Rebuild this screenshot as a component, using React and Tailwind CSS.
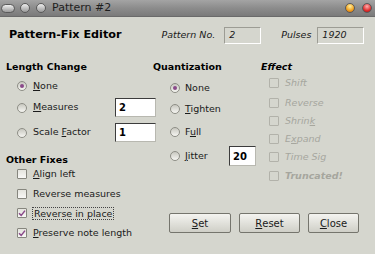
// Pattern-Fix Editor dialog (GTK clearlooks look)

function U({ children }) {
  return <span className="underline underline-offset-[1px]">{children}</span>
}

function Radio({ on }) {
  return (
    <div className="w-[10px] h-[10px] rounded-full border border-[#8e8e86] bg-gradient-to-b from-[#c8c8c0] to-[#f6f6f2] flex items-center justify-center shrink-0">
      {on && <div className="w-[4px] h-[4px] rounded-full bg-[#8a4a8a]" />}
    </div>
  )
}

function Check({ on, off }) {
  return (
    <div className={"w-[10px] h-[10px] rounded-[1px] border flex items-center justify-center shrink-0 " + (off ? "border-[#b2b2aa] bg-[#d5d6ce]" : "border-[#86867e] bg-gradient-to-b from-[#e4e4de] to-[#f8f8f6]")}>
      {on && (
        <svg viewBox="0 0 8 8" className="w-[8px] h-[8px]">
          <path d="M1 4.2 L3.2 6.4 L7 1.6" fill="none" stroke="#8a4a8a" strokeWidth="1.5" />
        </svg>
      )}
    </div>
  )
}

function Field({ value, w, h = "h-[19px]" }) {
  return (
    <div className={`${w} ${h} shrink-0 bg-white border border-[#3c3c3c] border-b-[#b8b8b0] border-r-[#b8b8b0] flex items-center pl-[3px] font-bold text-[10px] text-black`}>
      {value}
    </div>
  )
}

function Button({ children, w }) {
  return (
    <div className={`${w} h-[20px] rounded-[2px] border border-[#75756d] bg-gradient-to-b from-[#f4f4f0] to-[#cfcfc7] flex items-center justify-center text-[10px] text-[#1a1a1a]`}>
      {children}
    </div>
  )
}

function Dot({ color }) {
  return <div className="w-[10px] h-[10px] rounded-full border border-[#5a5a5a]" style={{ background: color }} />
}

export default function App() {
  return (
    <div className="w-[375px] h-[254px] bg-[#d5d6ce] overflow-hidden text-[#1a1a1a]" style={{ fontFamily: '"DejaVu Sans", Verdana, sans-serif' }}>

      {/* Title bar */}
      <div className="h-[17px] bg-gradient-to-b from-[#a4a4a4] via-[#8c8c8c] to-[#7a7a7a] border-b border-[#6a6a6a] flex items-center pl-[1px] pr-[3px]">
        <div className="w-[14px] h-[9px] rounded-full border border-[#5a5a5a] bg-gradient-to-b from-[#f0f0f0] to-[#9a9a9a]" />
        <div className="ml-[5px] w-[10px] h-[10px] rounded-full border border-[#5a5a5a] bg-gradient-to-b from-[#eeeeee] to-[#9a9a9a]" />
        <div className="ml-[6px] w-[10px] h-[10px] rounded-full border border-[#5a5a5a] bg-gradient-to-b from-[#eeeeee] to-[#9a9a9a]" />
        <span className="ml-[6px] text-[11px] text-[#1e1e1e]">Pattern #2</span>
        <div className="flex-1" />
        <Dot color="radial-gradient(circle at 50% 30%, #fff2a0, #f0a020 60%, #c86010)" />
        <div className="w-[7px]" />
        <Dot color="radial-gradient(circle at 50% 30%, #ffb0b0, #e03030 60%, #a01010)" />
      </div>

      {/* Header row */}
      <div className="flex items-center mt-[10px] h-[16px]">
        <span className="ml-[9px] text-[11.2px] font-bold text-black">Pattern-Fix Editor</span>
        <span className="ml-[40px] text-[9.5px] italic">Pattern No.</span>
        <div className="ml-[9px] w-[37px] h-[17px] border border-[#9c9c94] border-b-white border-r-white flex items-center pl-[4px] text-[9.5px] italic">2</div>
        <span className="ml-[20px] text-[9.5px] italic">Pulses</span>
        <div className="ml-[6px] w-[47px] h-[17px] border border-[#9c9c94] border-b-white border-r-white flex items-center pl-[4px] text-[9.5px] italic">1920</div>
      </div>

      <div className="flex mt-[17px]">
        {/* Column 1 */}
        <div className="w-[153px] shrink-0 pl-[6px] flex flex-col text-[9.5px]">
          <div className="h-[14px] flex items-center font-bold text-[9.5px] text-black">Length Change</div>
          <div className="mt-[2px] h-[20px] flex items-center pl-[11px] gap-[6px]"><Radio on /><span><U>N</U>one</span></div>
          <div className="mt-[2px] h-[19px] flex items-center pl-[11px] gap-[6px]"><Radio /><span className="w-[76px] shrink-0"><U>M</U>easures</span><Field value="2" w="w-[41px]" /></div>
          <div className="mt-[6px] h-[19px] flex items-center pl-[11px] gap-[6px]"><Radio /><span className="w-[76px] shrink-0">Scale <U>F</U>actor</span><Field value="1" w="w-[41px]" /></div>
          <div className="mt-[11px] h-[14px] flex items-center font-bold text-black">Other Fixes</div>
          <div className="h-[14px] flex items-center pl-[11px] gap-[6px]"><Check /><span><U>A</U>lign left</span></div>
          <div className="mt-[6px] h-[14px] flex items-center pl-[11px] gap-[6px]"><Check /><span>Reverse measures</span></div>
          <div className="mt-[5px] h-[14px] flex items-center pl-[11px] gap-[5px]"><Check on /><span className="border border-dotted border-[#444] px-[1px] leading-[11px]">Reverse in place</span></div>
          <div className="mt-[6px] h-[14px] flex items-center pl-[11px] gap-[6px]"><Check on /><span><U>P</U>reserve note length</span></div>
        </div>

        {/* Right side */}
        <div className="flex flex-col">
          <div className="flex h-[124px]">
            {/* Column 2 */}
            <div className="w-[108px] shrink-0 flex flex-col text-[9.5px]">
              <div className="h-[14px] flex items-center font-bold text-black">Quantization</div>
              <div className="mt-[4px] h-[20px] flex items-center pl-[17px] gap-[5px]"><Radio on /><span>None</span></div>
              <div className="mt-[1px] h-[20px] flex items-center pl-[17px] gap-[5px]"><Radio /><span><U>T</U>ighten</span></div>
              <div className="mt-[3px] h-[20px] flex items-center pl-[17px] gap-[5px]"><Radio /><span>F<U>u</U>ll</span></div>
              <div className="mt-[4px] h-[20px] flex items-center pl-[17px] gap-[5px]"><Radio /><span className="w-[39px] shrink-0"><U>J</U>itter</span><Field value="20" w="w-[27px]" h="h-[20px]" /></div>
            </div>
            {/* Column 3 */}
            <div className="flex flex-col text-[9.5px] text-[#a6a69e] italic">
              <div className="h-[14px] flex items-center font-bold text-black">Effect</div>
              <div className="mt-[1px] h-[16px] flex items-center pl-[8px] gap-[6px]"><Check off /><span>Shift</span></div>
              <div className="mt-[4px] h-[16px] flex items-center pl-[8px] gap-[6px]"><Check off /><span>Reverse</span></div>
              <div className="mt-[2px] h-[16px] flex items-center pl-[8px] gap-[6px]"><Check off /><span>Shrin<U>k</U></span></div>
              <div className="mt-[2px] h-[16px] flex items-center pl-[8px] gap-[6px]"><Check off /><span>E<U>x</U>pand</span></div>
              <div className="mt-[2px] h-[16px] flex items-center pl-[8px] gap-[6px]"><Check off /><span>Time Sig</span></div>
              <div className="mt-[3px] h-[16px] flex items-center pl-[8px] gap-[6px]"><Check off /><span className="font-bold">Truncated!</span></div>
            </div>
          </div>
          <div className="flex mt-[29px] pl-[16px] gap-[8px]">
            <Button w="w-[62px]"><U>S</U>et</Button>
            <Button w="w-[61px]"><U>R</U>eset</Button>
            <Button w="w-[51px]"><U>C</U>lose</Button>
          </div>
        </div>
      </div>
    </div>
  )
}
